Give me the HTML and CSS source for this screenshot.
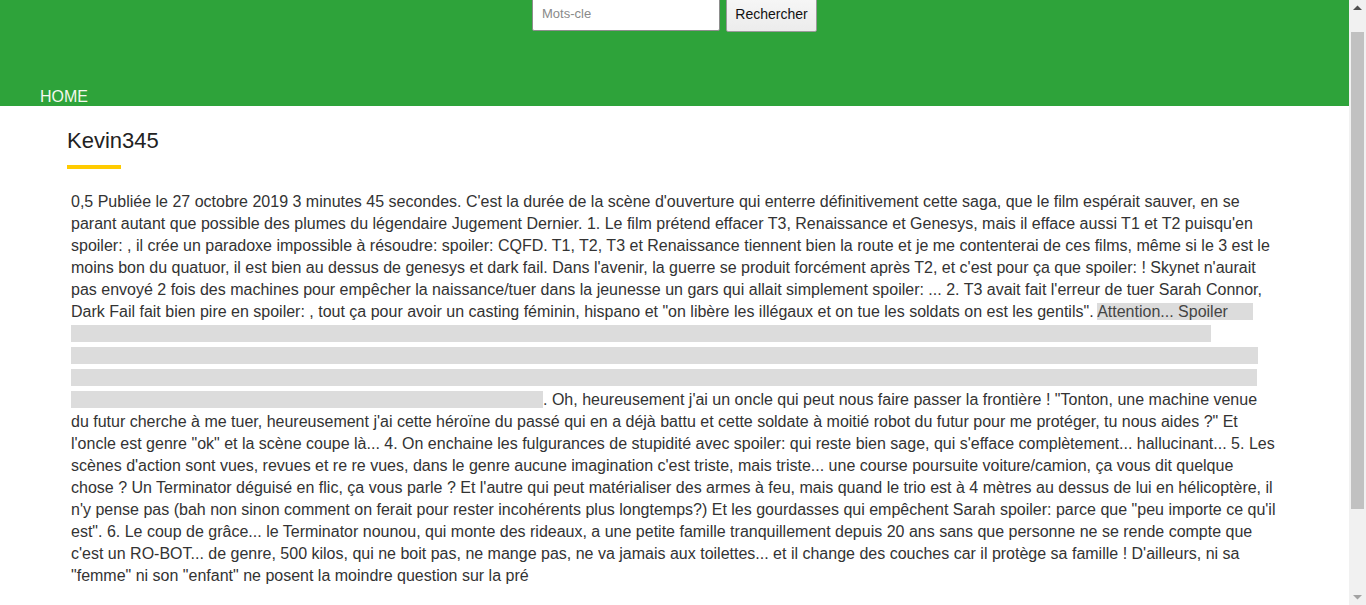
FILE: index.html
```html
<!DOCTYPE html>
<html lang="fr">
<head>
<meta charset="utf-8">
<title>Kevin345</title>
<link rel="stylesheet" href="styles.css">
</head>
<body>
<div class="page">
<header class="site-header">
  <form class="search">
    <input class="search-input" type="text" placeholder="Mots-cle">
    <button class="search-btn" type="button">Rechercher</button>
  </form>
  <nav class="nav">
    <a class="nav-link" href="#">HOME</a>
  </nav>
</header>
<main class="main">
  <h1 class="title">Kevin345</h1>
  <p class="review">0,5 Publiée le 27 octobre 2019 3 minutes 45 secondes. C'est la durée de la scène d'ouverture qui enterre définitivement cette saga, que le film espérait sauver, en se parant autant que possible des plumes du légendaire Jugement Dernier. 1. Le film prétend effacer T3, Renaissance et Genesys, mais il efface aussi T1 et T2 puisqu'en spoiler: , il crée un paradoxe impossible à résoudre: spoiler: CQFD. T1, T2, T3 et Renaissance tiennent bien la route et je me contenterai de ces films, même si le 3 est le moins bon du quatuor, il est bien au dessus de genesys et dark fail. Dans l'avenir, la guerre se produit forcément après T2, et c'est pour ça que spoiler: ! Skynet n'aurait pas envoyé 2 fois des machines pour empêcher la naissance/tuer dans la jeunesse un gars qui allait simplement spoiler: ... 2. T3 avait fait l'erreur de tuer Sarah Connor, Dark Fail fait bien pire en spoiler: , tout ça pour avoir un casting féminin, hispano et "on libère les illégaux et on tue les soldats on est les gentils". <span class="spoiler">Attention... Spoiler<i class="gap g1"></i><br><i class="gap g2"></i><br><i class="gap g3"></i><br><i class="gap g4"></i><br><i class="gap g5"></i></span>. Oh, heureusement j'ai un oncle qui peut nous faire passer la frontière ! "Tonton, une machine venue du futur cherche à me tuer, heureusement j'ai cette héroïne du passé qui en a déjà battu et cette soldate à moitié robot du futur pour me protéger, tu nous aides ?" Et l'oncle est genre "ok" et la scène coupe là... 4. On enchaine les fulgurances de stupidité avec spoiler: qui reste bien sage, qui s'efface complètement... hallucinant... 5. Les scènes d'action sont vues, revues et re re vues, dans le genre aucune imagination c'est triste, mais triste... une course poursuite voiture/camion, ça vous dit quelque chose ? Un Terminator déguisé en flic, ça vous parle ? Et l'autre qui peut matérialiser des armes à feu, mais quand le trio est à 4 mètres au dessus de lui en hélicoptère, il n'y pense pas (bah non sinon comment on ferait pour rester incohérents plus longtemps?) Et les gourdasses qui empêchent Sarah spoiler: parce que "peu importe ce qu'il est". 6. Le coup de grâce... le Terminator nounou, qui monte des rideaux, a une petite famille tranquillement depuis 20 ans sans que personne ne se rende compte que c'est un RO-BOT... de genre, 500 kilos, qui ne boit pas, ne mange pas, ne va jamais aux toilettes... et il change des couches car il protège sa famille ! D'ailleurs, ni sa "femme" ni son "enfant" ne posent la moindre question sur la pré</p>
</main>
</div>
<div class="scrollbar" aria-hidden="true">
  <div class="sb-btn"><svg width="17" height="17" viewBox="0 0 17 17"><path d="M4 10 L8.5 5.5 L13 10 Z" fill="#505050"/></svg></div>
  <div class="sb-track"><div class="sb-thumb"></div></div>
  <div class="sb-btn"><svg width="17" height="17" viewBox="0 0 17 17"><path d="M4 7 L8.5 11.5 L13 7 Z" fill="#a3a3a3"/></svg></div>
</div>
<script src="script.js"></script>
</body>
</html>
```
FILE: styles.css
```css
body {
  margin: 0;
  font-family: "Liberation Sans", Arial, sans-serif;
  color: #333;
  background: #fff;
}
.page {
  width: 1349px;
}
.site-header {
  background: #2ea33a;
  height: 125px;
  display: flex;
  flex-direction: column;
  justify-content: space-between;
}
.search {
  display: flex;
  justify-content: center;
  align-items: flex-start;
  gap: 6px;
  padding-top: 14px;
  margin: 0;
}
.search-input {
  box-sizing: border-box;
  width: 188px;
  height: 36px;
  border: 1px solid #8d8d8d;
  border-radius: 2px;
  padding: 0 9px;
  font-family: "Liberation Sans", Arial, sans-serif;
  font-size: 13px;
  color: #333;
  background: #fff;
}
.search-input::placeholder {
  color: #8a8a8a;
}
.search-btn {
  box-sizing: border-box;
  width: 91px;
  height: 37px;
  border: 1px solid #9a9a9a;
  border-radius: 2px;
  background: linear-gradient(#f7f7f7, #ececec);
  font-family: "Liberation Sans", Arial, sans-serif;
  font-size: 14px;
  color: #111;
  padding: 0;
}
.nav {
  padding-left: 40px;
  line-height: 18px;
  font-size: 16px;
}
.nav-link {
  color: #f4f8ee;
  text-decoration: none;
}
.main {
  padding: 22px 72px 129px 67px;
}
.title {
  margin: 0;
  font-size: 22px;
  line-height: 26px;
  font-weight: normal;
  color: #222;
  padding-bottom: 9px;
}
.title::after {
  content: "";
  display: block;
  width: 54px;
  height: 4px;
  background: #ffcb00;
  margin-top: 11px;
}
.review {
  margin: 13px 0 0;
  padding-left: 4px;
  font-size: 16px;
  line-height: 22px;
  color: #333;
}
.spoiler {
  background: #dcdcdc;
  color: #444;
}
.gap {
  display: inline-block;
  height: 1px;
}
.g1 { width: 25px; }
.g2 { width: 1140px; }
.g3 { width: 1187px; }
.g4 { width: 1186px; }
.g5 { width: 472px; }
.scrollbar {
  position: fixed;
  top: 0;
  right: 0;
  width: 17px;
  height: 100%;
  background: #f1f1f1;
  display: flex;
  flex-direction: column;
}
.sb-btn {
  height: 17px;
  flex: none;
}
.sb-btn svg {
  display: block;
}
.sb-track {
  flex: 1;
  padding: 15px 2px 79px;
  display: flex;
}
.sb-thumb {
  flex: 1;
  background: #c1c1c1;
}
```
FILE: script.js
```js
window.scrollTo(0, 19);
```
